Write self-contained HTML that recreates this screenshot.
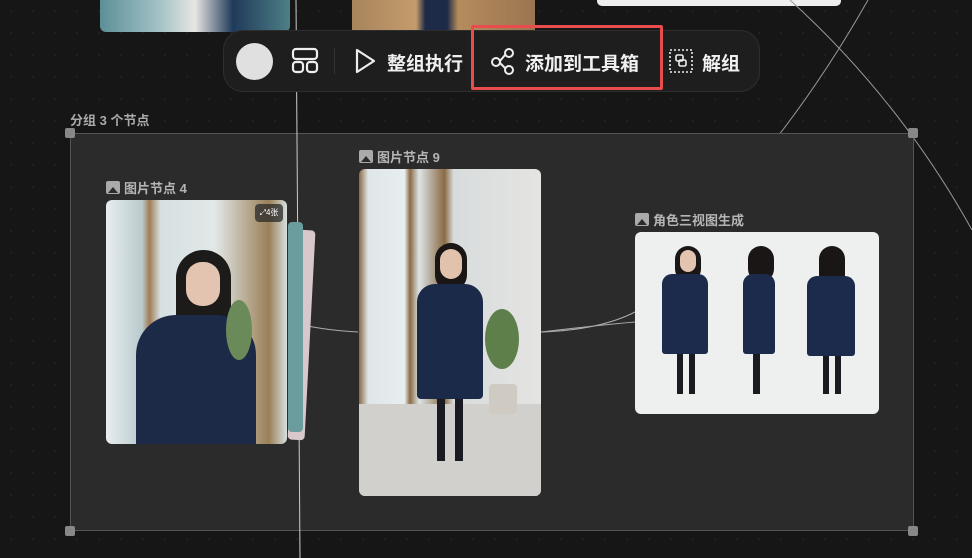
<!DOCTYPE html>
<html><head><meta charset="utf-8"><style>
*{margin:0;padding:0;box-sizing:border-box}
body{width:972px;height:558px;overflow:hidden;background:#161616;position:relative;font-family:"Liberation Sans","Noto Sans CJK SC",sans-serif;background-image:radial-gradient(#242424 1px,transparent 1px);background-size:22px 22px}
.a{position:absolute}
.lbl{color:#b5b5b5;font-size:13px;font-weight:bold;display:flex;align-items:center;gap:4px}
.ic{width:14px;height:13px;background:#aaa;border-radius:2px;position:relative;overflow:hidden}
.ic:after{content:"";position:absolute;left:2px;bottom:1px;border-left:5px solid transparent;border-right:5px solid transparent;border-bottom:6px solid #2b2b2b}
.tb{color:#f0f0f0;font-size:19px;font-weight:600}
.fig{position:absolute}
</style></head><body>
<div class="a" style="left:100px;top:0;width:190px;height:32px;border-radius:0 0 6px 6px;background:linear-gradient(90deg,#5d8f98,#9fc0c4 30%,#e8e6e2 50%,#1f3a5a 70%,#4e7f86)"></div>
<div class="a" style="left:352px;top:0;width:183px;height:30px;background:linear-gradient(90deg,#a8845c,#c49c6c 35%,#1e2b48 40%,#1e2b48 52%,#b48c5c 58%,#9c7450)"></div>
<div class="a" style="left:597px;top:0;width:244px;height:6px;background:#eee;border-radius:0 0 5px 5px"></div>
<svg class="a" style="left:0;top:0" width="972" height="558">
<path d="M790 0 Q900 100 972 230" stroke="#999" fill="none"/>
<path d="M868 0 Q800 120 715 210" stroke="#999" fill="none"/>
</svg>
<div class="a" style="left:70px;top:133px;width:844px;height:398px;background:#2b2b2b;border:1px solid #555"></div>
<div class="a" style="left:65px;top:128px;width:10px;height:10px;background:#888;border-radius:2px"></div>
<div class="a" style="left:908px;top:128px;width:10px;height:10px;background:#888;border-radius:2px"></div>
<div class="a" style="left:65px;top:526px;width:10px;height:10px;background:#888;border-radius:2px"></div>
<div class="a" style="left:908px;top:526px;width:10px;height:10px;background:#888;border-radius:2px"></div>
<div class="a" style="left:70px;top:110px;color:#aaa;font-size:13px;font-weight:bold">分组 3 个节点</div>
<svg class="a" style="left:0;top:0" width="972" height="558">
<path d="M296 0 L300 558" stroke="#ccc" stroke-width="1" fill="none"/>
<path d="M290 322 Q320 330 358 332" stroke="#aaa" fill="none"/>
<path d="M541 332 Q600 330 635 312" stroke="#aaa" fill="none"/>
<path d="M541 332 Q600 325 635 322" stroke="#aaa" fill="none"/>
</svg>
<div class="a lbl" style="left:106px;top:178px"><span class="ic"></span>图片节点 4</div>
<div class="a" style="left:293px;top:230px;width:17px;height:210px;background:#d8c8cc;border-radius:4px;transform:rotate(3deg)"></div>
<div class="a" style="left:288px;top:222px;width:15px;height:210px;background:#6b9c9e;border-radius:4px"></div>
<div class="a" style="left:106px;top:200px;width:181px;height:244px;border-radius:6px;overflow:hidden;background:linear-gradient(90deg,#e8eef0,#b9c9cc 20%,#a07c54 24%,#d6e0e2 30%,#e2e8e8 60%,#9a8058 90%,#d8e0e0)">
 <div class="fig" style="left:70px;top:50px;width:55px;height:80px;background:#1d1a1a;border-radius:28px 28px 10px 10px"></div>
 <div class="fig" style="left:80px;top:62px;width:34px;height:44px;background:#e3c4b0;border-radius:16px"></div>
 <div class="fig" style="left:30px;top:115px;width:120px;height:129px;background:#1c2a48;border-radius:40px 40px 0 0"></div>
 <div class="fig" style="left:120px;top:100px;width:26px;height:60px;background:#6b8a5a;border-radius:50%"></div>
</div>
<div class="a" style="left:255px;top:204px;width:28px;height:18px;background:rgba(40,40,40,.75);border-radius:4px;color:#fff;font-size:8px;line-height:18px;text-align:center">⤢4张</div>
<div class="a lbl" style="left:359px;top:147px"><span class="ic"></span>图片节点 9</div>
<div class="a" style="left:359px;top:169px;width:182px;height:327px;border-radius:6px;overflow:hidden;background:linear-gradient(90deg,#8a6a44,#dfe6e8 5%,#e8eef0 25%,#8a6a44 28%,#dce4e6 33%,#8a6a44 47%,#d8dcdc 52%,#e4e4e2)">
 <div class="fig" style="left:0;top:235px;width:182px;height:92px;background:#d2d0cc"></div>
 <div class="fig" style="left:76px;top:74px;width:32px;height:48px;background:#1a1616;border-radius:16px"></div>
 <div class="fig" style="left:81px;top:80px;width:22px;height:30px;background:#e3c2ac;border-radius:11px"></div>
 <div class="fig" style="left:58px;top:115px;width:66px;height:115px;background:#1c2a4a;border-radius:18px 18px 4px 4px"></div>
 <div class="fig" style="left:78px;top:230px;width:8px;height:62px;background:#1a1a22"></div>
 <div class="fig" style="left:96px;top:230px;width:8px;height:62px;background:#1a1a22"></div>
 <div class="fig" style="left:126px;top:140px;width:34px;height:60px;background:#5e7e4a;border-radius:50%"></div>
 <div class="fig" style="left:130px;top:215px;width:28px;height:30px;background:#cfcac2;border-radius:4px"></div>
</div>
<div class="a lbl" style="left:635px;top:210px"><span class="ic"></span>角色三视图生成</div>
<div class="a" style="left:635px;top:232px;width:244px;height:182px;border-radius:6px;overflow:hidden;background:#eef0f0">
 <div class="fig" style="left:40px;top:14px;width:26px;height:36px;background:#1a1616;border-radius:13px"></div>
 <div class="fig" style="left:45px;top:18px;width:16px;height:22px;background:#e2c4b0;border-radius:8px"></div>
 <div class="fig" style="left:27px;top:42px;width:46px;height:80px;background:#1c2a4c;border-radius:10px 10px 3px 3px"></div>
 <div class="fig" style="left:42px;top:122px;width:6px;height:40px;background:#1a1a22"></div><div class="fig" style="left:54px;top:122px;width:6px;height:40px;background:#1a1a22"></div>
 <div class="fig" style="left:113px;top:14px;width:26px;height:36px;background:#1a1616;border-radius:13px"></div>
 <div class="fig" style="left:108px;top:42px;width:32px;height:80px;background:#1c2a4c;border-radius:10px 10px 3px 3px"></div>
 <div class="fig" style="left:118px;top:122px;width:7px;height:40px;background:#1a1a22"></div>
 <div class="fig" style="left:184px;top:14px;width:26px;height:42px;background:#1a1616;border-radius:13px"></div>
 <div class="fig" style="left:172px;top:44px;width:48px;height:80px;background:#1c2a4c;border-radius:10px 10px 3px 3px"></div>
 <div class="fig" style="left:188px;top:124px;width:6px;height:38px;background:#1a1a22"></div><div class="fig" style="left:200px;top:124px;width:6px;height:38px;background:#1a1a22"></div>
</div>
<div class="a" style="left:223px;top:30px;width:537px;height:62px;background:#1e1e1e;border:1px solid #2e2e2e;border-radius:20px"></div>
<div class="a" style="left:236px;top:43px;width:37px;height:37px;border-radius:50%;background:#e0e0e0"></div>
<svg class="a" style="left:290px;top:47px" width="30" height="28" fill="none" stroke="#eee" stroke-width="2.2"><rect x="3" y="2" width="24" height="10" rx="3"/><rect x="3" y="15" width="10" height="10" rx="3"/><rect x="17" y="15" width="10" height="10" rx="3"/></svg>
<div class="a" style="left:334px;top:48px;width:1px;height:26px;background:#333"></div>
<svg class="a" style="left:353px;top:47px" width="24" height="28" fill="none" stroke="#eee" stroke-width="2.2" stroke-linejoin="round"><path d="M4 3 L21 14 L4 25 Z"/></svg>
<div class="a tb" style="left:387px;top:49px">整组执行</div>
<div class="a" style="left:471px;top:25px;width:192px;height:65px;border:3px solid #e84c4c;border-radius:2px"></div>
<svg class="a" style="left:490px;top:47px" width="26" height="28" fill="none" stroke="#eee" stroke-width="2"><circle cx="6" cy="15" r="4"/><circle cx="19" cy="6" r="4"/><circle cx="19" cy="23" r="4"/><path d="M10 14 L15 8 M10 16 L15 21"/></svg>
<div class="a tb" style="left:525px;top:49px">添加到工具箱</div>
<svg class="a" style="left:668px;top:48px" width="26" height="26" fill="none" stroke="#eee" stroke-width="1.6"><rect x="2" y="2" width="22" height="22" stroke-dasharray="2 2"/><rect x="8" y="7" width="7" height="6" rx="1.5"/><rect x="11" y="12" width="7" height="6" rx="1.5"/></svg>
<div class="a tb" style="left:702px;top:49px">解组</div>
</body></html>
